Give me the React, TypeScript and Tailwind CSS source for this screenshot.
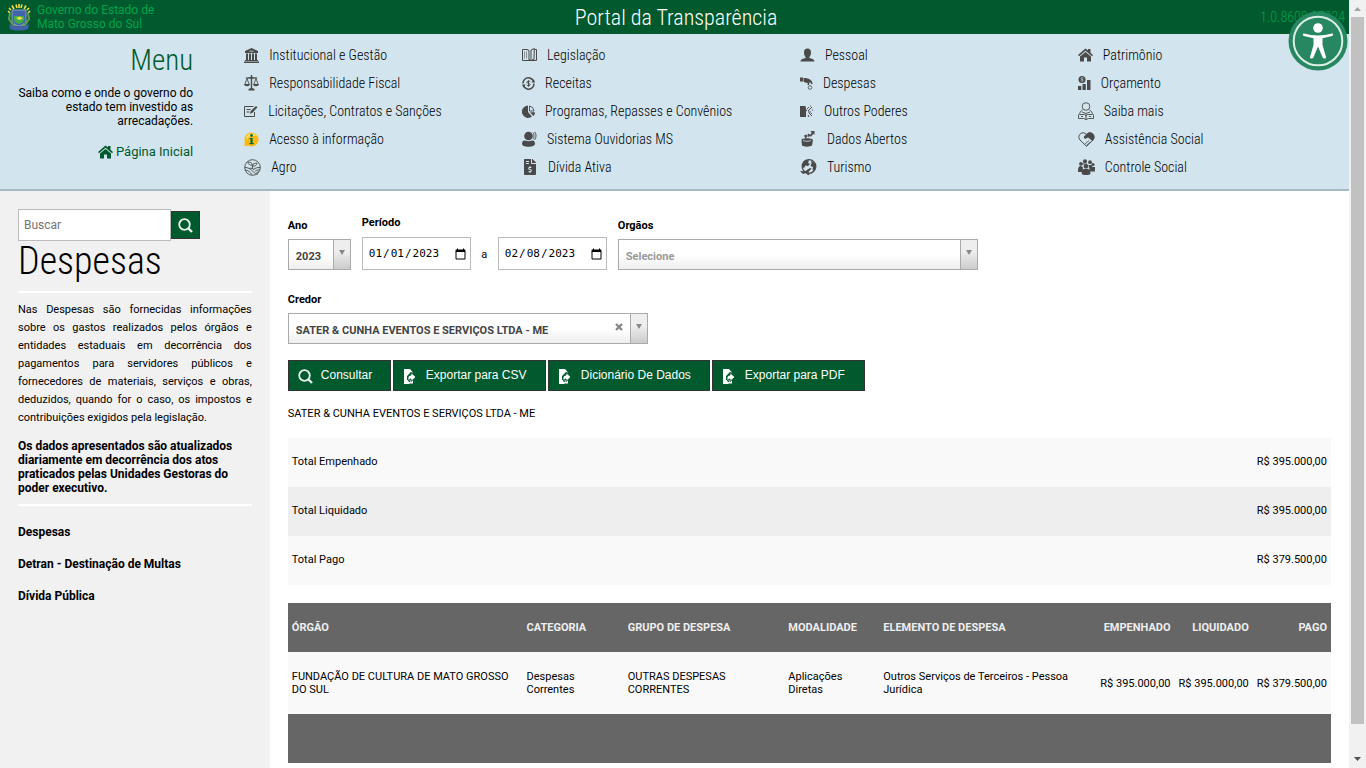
import React, { FC, ReactNode, useState } from 'react'
import { FaFileInvoiceDollar } from 'react-icons/fa'

type MenuItem = {
  name: string
  icon: ReactNode
}

const fill = 'fill-[#4a4a4a]'
const line = 'fill-none stroke-[#4a4a4a]'

const IconBank = () => (
  <svg viewBox="0 0 15 15" className={`w-[15px] h-[15px] ${fill}`}>
    <path d="M7.500 0L14 3v2H1V3zM2 5.500h2V12H2zM5 5.500h2V12H5zM8 5.500h2V12H8zM11 5.500h2V12h-2zM1 12h13v1H1zM0 13.500h15V15H0z" />
    <path d="M5.500 3.200h4" className="stroke-[#d2e4ee]" strokeWidth=".8" />
  </svg>
)

const IconScale = () => (
  <svg viewBox="0 0 15 16" className={`w-[15px] h-[16px] ${fill}`}>
    <path d="M6.800 0h1.400v2l5 .5v1l-5 .3V13l2.300 1v1.500h-6V14l2.300-1V3.800l-5-.3v-1l5-.5z" />
    <path d="M3 3.500L1 9M3 3.500L5 9M12 3.500L10 9M12 3.500l2 5.500" className={line} strokeWidth=".9" />
    <path d="M0 9h6c-.3 3-5.700 3-6 0zM9 9h6c-.3 3-5.700 3-6 0z" />
  </svg>
)

const IconEdit = () => (
  <svg viewBox="0 0 14 14" className={`w-[14px] h-[14px] ${line}`}>
    <path d="M10.500 8v4.500h-10v-10h9M2.500 5.500h4M2.500 8h3" />
    <path d="M6 10l.7-3L12 2l1.500 1.200-5 5.500z" className="fill-[#4a4a4a] stroke-none" />
  </svg>
)

const IconInfo = () => (
  <svg viewBox="0 0 15 15" className="w-[15px] h-[15px]">
    <path d="M7.500.5a7 7 0 1 1-3 13.300L.5 14.300v-7a7 7 0 0 1 7-6.800z" fill="#fdb913" />
    <path d="M2 7a6 5.500 0 0 1 11-3C9 3 5 4 2 7z" fill="#ffe26b" />
    <circle cx="7.500" cy="3.500" r="1.400" fill="#0a6b35" />
    <path d="M5.700 6h3v5h1v1.300H5.500V11h1V7.300h-.8z" fill="#0a6b35" />
  </svg>
)

const IconAgro = () => (
  <svg viewBox="0 0 17 17" className={`w-[17px] h-[17px] ${line}`} strokeWidth=".9">
    <circle cx="8.500" cy="8.500" r="7.800" />
    <path d="M8.500 9.500V6M8.500 6C8 3.500 6 3 4 3.200 4.200 5.500 6 6.500 8.500 6zM8.500 7c.3-2 2-3 4.500-2.800C12.500 6.500 11 7.500 8.500 7z" />
    <path d="M1 8.500c3 0 5 1 8 4s4 3 5 2.200M1 11c3 .2 5 1.500 7 4.800M16 8.500c-3 0-4.500.5-6.500 2M16 11c-2-.2-3.500.2-5 1.200M15 13c-1 0-2 .2-2.500.6M5 9.500c2-.5 4-.2 5 1" />
  </svg>
)

const IconBook = () => (
  <svg viewBox="0 0 15 14" className={`w-[15px] h-[14px] ${line}`}>
    <path d="M7 2.500L5 1.500H.5v11H7zM7 12.500l5-1 .3-11L9 2v8.500L7 12.500M12.500 1.500h2v11H7" />
    <path d="M2.500 3.500v7M4.500 3.500v7" strokeWidth=".9" className="stroke-[#808a90]" />
  </svg>
)

const IconMoney = () => (
  <svg viewBox="0 0 13 13" className={`w-[13px] h-[13px] ${line}`}>
    <path d="M1.300 8a5.500 5.500 0 0 0 9.200 2.500M11.700 5a5.500 5.500 0 0 0-9.200-2.500M1 6.500c0-2 .6-3.100 1.500-4M12 6.500c0 2-.6 3.100-1.500 4" strokeWidth="1.500" />
    <path d="M0 7.500h3.500l-2 3zM9.500 5.500H13l-1-3z" className="fill-[#4a4a4a] stroke-none" />
    <path d="M8.300 4.700C7.500 4 4.900 3.900 4.900 5.400c0 1.300 3.300.8 3.300 2.200 0 1.500-2.700 1.300-3.500.5M6.500 3.300v6.400" />
  </svg>
)

const IconPie = () => (
  <svg viewBox="0 0 13 13" className={`w-[13px] h-[13px] ${fill}`}>
    <path d="M6 .5V7l4 4.500A6.200 6.200 0 1 1 6 .5z" />
    <path d="M7.500 1a5.500 5.500 0 0 1 4.500 5H7.500z" className={line} strokeWidth=".9" />
    <path d="M8 7.300h5c0 1.500-.7 3-1.700 3.800z" />
  </svg>
)

const IconSpeaker = () => (
  <svg viewBox="0 0 15 16" className={`w-[15px] h-[16px] ${fill}`}>
    <circle cx="6.500" cy="5" r="4.300" />
    <path d="M0 12.500C0 10 2 9.500 3 9.500c2 1 5 1 7 0 1 0 3 .5 3 3s-2.500 3.200-6.500 3.200S0 15 0 12.500z" />
    <path d="M11 1.500c1.300 1.500 1.300 5 0 6.500M12.800.8c1.800 2.700 1.600 5.700-.3 8.200" className={line} strokeWidth=".9" />
  </svg>
)

const IconPerson = () => (
  <svg viewBox="0 0 15 14" className={`w-[15px] h-[14px] ${fill}`}>
    <path d="M7.500.5C9.800.5 11 2 11 4.500S9.800 9 9 9.500c.8 1 5.500 1 5.500 4H.5c0-3 4.700-3 5.500-4C5 9 4 7 4 4.500S5.200.5 7.500.5z" />
  </svg>
)

const IconHand = () => (
  <svg viewBox="0 0 13 13" className={`w-[13px] h-[13px] ${fill}`}>
    <path d="M0 .5h3v4H0zM3.500 1c3 0 5.500.5 7 2 1.500 1 2 2.500 2 4l-1.200.2-1-2-.8.3-.5 2.500L7.500 8l.2-2C6 6 4 5 3.500 4.500z" />
    <circle cx="10" cy="10.500" r="1.800" className={line} strokeWidth=".8" />
  </svg>
)

const IconPowers = () => (
  <svg viewBox="0 0 14 13" className={`w-[14px] h-[13px] ${fill}`}>
    <path d="M0 1h5.500l.5 3 1 1.500-1 1V12H0z" />
    <path d="M7 4l2-2M8 6l4-4M8 7h3M9 8l3 3M8 10l1 2M12 5h1M11 8l1 1M10 1h1" className={line} />
  </svg>
)

const IconOpenData = () => (
  <svg viewBox="0 0 17 16" className={`w-[17px] h-[16px] ${fill}`}>
    <path d="M2 8c2-1 8-1 10 0l1 1-1 5.500c-2 1.500-8 1.500-10 0L1.500 9zM4 4.500l2.500-1 1 2-2 2zM8 2.500l2 1-1 3-1.500-2zM10.500 0h4v4l-1.200-1.200-2.300 3-1.500-1 2.200-3z" />
    <path d="M3 9.500c2 1 6 1 8 0" className="fill-none stroke-[#d2e4ee]" strokeWidth=".8" />
  </svg>
)

const IconGlobe = () => (
  <svg viewBox="0 0 17 17" className={`w-[17px] h-[17px] ${fill}`}>
    <circle cx="9" cy="7.500" r="6.800" className={line} strokeWidth="1.300" />
    <path d="M3 3c2-2.500 5-2 6-1.500L8 4l2 1-2 2-2.500-.5L4 9 2 8zM11 2c3 1 5 3 4.500 7l-1.500 3-1.500-1 .5-3-2.500-1 1-2.500z" />
    <path d="M0 12l5 .3L10 9l1.500.5-3 3.500 1 2.500-1.500.8-2-2.300-3 1z" />
  </svg>
)

const IconHouse: FC<{ className: string }> = ({ className }) => (
  <svg viewBox="0 0 15 14" className={`w-[15px] h-[14px] ${className}`}>
    <path d="M7.500.5L10 2.600V1h2.500v3.800L15 7l-1 1.200-6.500-5.500L1 8.200 0 7z" />
    <path d="M7.500 4L13 8.500v5H9V9.500H6v4H2v-5z" />
  </svg>
)

const IconBudget = () => (
  <svg viewBox="0 0 13 14" className={`w-[13px] h-[14px] ${fill}`}>
    <path d="M0 10h3.300v4H0zM4.500 8h3.300v6H4.500zM9 4h3.500v10H9z" />
    <circle cx="4" cy="3.500" r="3.500" />
    <path d="M5.300 2.200c-1-.7-2.500-.3-2.300.6s2.100.4 2.100 1.400-1.600 1-2.300.5" className="fill-none stroke-[#d2e4ee]" strokeWidth=".8" />
  </svg>
)

const IconReader = () => (
  <svg viewBox="0 0 16 18" className={`w-[16px] h-[18px] ${line}`} strokeWidth=".9">
    <circle cx="8" cy="4.500" r="3.800" />
    <path d="M4.500 8C2.500 9 1.500 11 1.500 12.500h5L8 14l1.500-1.500h5C14.500 11 13.500 9 11.500 8M4 10l4 1.500 4-1.500M.5 12.500v4h5L8 17.500l2.500-1h5v-4M3 14.500h2M11 14.500h2M8 12v5.500" />
  </svg>
)

const IconHeart = () => (
  <svg viewBox="0 0 17 15" className={`w-[17px] h-[15px] ${fill}`}>
    <path d="M8.500 14.300L2 8C-.5 5 1.500.8 5 .8c1.500 0 2.700.7 3.500 2 .8-1.300 2-2 3.500-2 3.500 0 5.500 4.200 3 7.200z" className={line} />
    <path d="M5.500 5l3-3C10-.2 14 0 15.500 2.500S16 8 14.500 9L10 5.500 7 7z" />
    <path d="M7 12l4-3.500M8.500 13.500l4-3.500" className={line} strokeWidth=".8" />
  </svg>
)

const IconPeople = () => (
  <svg viewBox="0 0 17 16" className={`w-[17px] h-[16px] ${fill}`}>
    <circle cx="7" cy="2.200" r="2" />
    <circle cx="3" cy="4.800" r="1.900" />
    <circle cx="12" cy="3.200" r="1.900" />
    <circle cx="15" cy="5.500" r="1.600" />
    <circle cx="8" cy="7.200" r="2.300" />
    <path d="M0 12c0-4 1-5 3-5l2 1.500L4.500 13H0zM5 4.500h4v1H5zM10.500 6h3l1 2H17v4.500h-5L11 8zM3.800 15c0-4 1.200-5.200 4.200-5.200s4.500 1.200 4.500 5.200c-2 1.300-7 1.300-8.700 0z" />
  </svg>
)

const menuColumns: MenuItem[][] = [
  [
    { name: 'Institucional e Gestão', icon: <IconBank /> },
    { name: 'Responsabilidade Fiscal', icon: <IconScale /> },
    { name: 'Licitações, Contratos e Sanções', icon: <IconEdit /> },
    { name: 'Acesso à informação', icon: <IconInfo /> },
    { name: 'Agro', icon: <IconAgro /> }
  ],
  [
    { name: 'Legislação', icon: <IconBook /> },
    { name: 'Receitas', icon: <IconMoney /> },
    { name: 'Programas, Repasses e Convênios', icon: <IconPie /> },
    { name: 'Sistema Ouvidorias MS', icon: <IconSpeaker /> },
    { name: 'Dívida Ativa', icon: <FaFileInvoiceDollar size={16} className={fill} /> }
  ],
  [
    { name: 'Pessoal', icon: <IconPerson /> },
    { name: 'Despesas', icon: <IconHand /> },
    { name: 'Outros Poderes', icon: <IconPowers /> },
    { name: 'Dados Abertos', icon: <IconOpenData /> },
    { name: 'Turismo', icon: <IconGlobe /> }
  ],
  [
    { name: 'Patrimônio', icon: <IconHouse className={fill} /> },
    { name: 'Orçamento', icon: <IconBudget /> },
    { name: 'Saiba mais', icon: <IconReader /> },
    { name: 'Assistência Social', icon: <IconHeart /> },
    { name: 'Controle Social', icon: <IconPeople /> }
  ]
]

const totals = [
  { name: 'Total Empenhado', value: 'R$ 395.000,00' },
  { name: 'Total Liquidado', value: 'R$ 395.000,00' },
  { name: 'Total Pago', value: 'R$ 379.500,00' }
]

const sideLinks = ['Despesas', 'Detran - Destinação de Multas', 'Dívida Pública']

const condensed = "font-['Roboto_Condensed','Roboto',sans-serif] font-light"

const IconSearch = () => (
  <svg viewBox="0 0 15 15" className="w-[15px] h-[15px] fill-none stroke-[#e8f1ec]">
    <circle cx="6.500" cy="6.500" r="5.300" strokeWidth="1.800" />
    <path d="M10.500 10.500l3.500 3.500" strokeWidth="2.400" />
  </svg>
)

const IconExport = () => (
  <svg viewBox="0 0 14 15" className="w-[14px] h-[15px]">
    <path d="M1 0h6v4l-3 3v5l3 3H1z" fill="#fff" />
    <path d="M7 0l3 3.500H7zM4 11h6v3.500H4z" fill="#fff" />
    <path d="M8 3.500L13 8l-5 4.500V10C6.500 10 6 11 6.500 13 4 10 4.500 6.500 8 6z" fill="#fff" stroke="#005a2d" />
  </svg>
)

const Crest = () => (
  <svg viewBox="0 0 24 27" className="w-[24px] h-[27px]" aria-hidden="true">
    <path d="M3 9l-2-2M4 6L2 4M7 5L5 1.500M10 4L9 .5M12 4V0M14 4l1-3.500M17 5l2-3.500M20 6l2-2M21 9l2-2" stroke="#f6e04b" strokeWidth="1.600" />
    <path d="M3 9l-1 6 4 6h12l4-6-1-6" fill="none" stroke="#5c9e54" strokeWidth="2" />
    <path d="M5 6h14v9c0 4-3 6-7 7-4-1-7-3-7-7z" fill="#3f66ad" stroke="#8f9ec0" />
    <path d="M7 12h10v3c0 3-2 4-5 5-3-1-5-2-5-5z" fill="#41ad49" />
    <path d="M9 14l4-1.500 3 2-4 1.500z" fill="#f3df3c" />
    <path d="M2 20c4 3 16 3 20 0l-1 5c-5 2-13 2-18 0z" fill="#4462a8" />
  </svg>
)

const Accessibility = () => (
  <button aria-label="Acessibilidade" className="absolute right-px top-[11px]">
    <svg viewBox="0 0 60 60" className="w-[60px] h-[60px]">
      <circle cx="30" cy="30" r="29.500" fill="#268760" />
      <circle cx="30" cy="30" r="24.300" fill="none" stroke="#dcefe6" strokeWidth="2" />
      <circle cx="30" cy="17" r="4.800" fill="#fff" />
      <path d="M16 22.500c9 2.500 19 2.500 28 0 1.500-.2 1.500 2 0 2.500l-9.500 2.200V34l3.500 12c.3 2-2.700 2.200-3.500.3L30 35.500l-4.500 10.800c-.8 1.900-3.800 1.700-3.500-.3L25.500 34v-6.800L16 25c-1.500-.5-1.500-2.700 0-2.500z" fill="#fff" />
    </svg>
  </button>
)

const SelectField: FC<{
  id: string
  title: string
  option: string
  clsRoot: string
  clsText?: string
  clear?: boolean
}> = ({ id, title, option, clsRoot, clsText = 'text-[#444]', clear }) => (
  <div className={clsRoot}>
    <label htmlFor={id} className="block mb-[7px] font-bold leading-3">
      {title}
    </label>
    <div className="relative">
      <select
        id={id}
        className={`block w-full h-[31px] appearance-none border border-[#aaa] bg-linear-to-t from-[#eee] to-white to-50% pl-[7px] pt-[5px] font-bold ${clsText}`}
      >
        <option>{option}</option>
      </select>
      {clear && (
        <button aria-label="Limpar" className="absolute right-[25px] top-[10px]">
          <svg viewBox="0 0 8 8" className="w-[8px] h-[8px] stroke-[#888]" strokeWidth="2.400">
            <path d="M1 1l6 6M7 1L1 7" />
          </svg>
        </button>
      )}
      <span className="pointer-events-none absolute right-0 top-0 h-[31px] w-[18px] border border-[#aaa] bg-linear-to-t from-[#ccc] to-[#eee] to-60% flex justify-center pt-[10px]">
        <svg viewBox="0 0 6 5" className="w-[6px] h-[5px] fill-[#888]">
          <path d="M0 0h6L3 5z" />
        </svg>
      </span>
    </div>
  </div>
)

const DateField: FC<{ id: string; label: string; start: string }> = ({ id, label, start }) => {
  const [value, setValue] = useState<string>(start)
  return (
    <input
      id={id}
      aria-label={label}
      type="date"
      value={value}
      onChange={(e) => setValue(e.target.value)}
      className="block w-[109px] h-[33px] border border-[#bbb] bg-white pl-[5px] pr-px pt-[2px] font-['DejaVu_Sans_Mono',monospace] text-[11px] [&::-webkit-calendar-picker-indicator]:h-[13px] [&::-webkit-calendar-picker-indicator]:w-[13px]"
    />
  )
}

const ActionButton: FC<{ icon: ReactNode; cls: string; children: ReactNode }> = ({ icon, cls, children }) => (
  <button
    className={`flex h-[31px] items-center border border-[#333] bg-[#005a2d] pb-[2px] pl-[9px] text-[12px] text-white font-['Liberation_Sans',sans-serif] ${cls}`}
  >
    <span className="mt-1 w-[23px]">{icon}</span>
    <span>{children}</span>
  </button>
)

const Header = () => (
  <header>
    <div className="relative flex h-[34px] items-center bg-[#005a2d]">
      <div className="flex flex-1 items-center gap-[6px] pl-[7px] text-[12px] leading-[14px] text-[#00a44a]">
        <Crest />
        <span>
          Governo do Estado de
          <br />
          Mato Grosso do Sul
        </span>
      </div>
      <h1 className={`pt-[2px] text-[22px] leading-8 text-white ${condensed}`}>Portal da Transparência</h1>
      <div className={`flex-1 pr-1 text-right text-[14px] text-[#00a44a] ${condensed}`}>1.0.8608.27224</div>
      <Accessibility />
    </div>
    <div className="grid h-[157px] grid-cols-[18.1%_20.6%_20.6%_20.6%_1fr] border-b-2 border-[#a4bbc6] bg-[#d2e4ee]">
      <div className="pr-[51px] pt-[10px] text-right">
        <h2 className={`text-[29px] leading-8 text-[#005a2d] ${condensed}`}>Menu</h2>
        <p className="mt-[10px] pl-3 text-[12px] leading-[14px]">
          Saiba como e onde o governo do estado tem investido as arrecadações.
        </p>
        <a href="#" className="mt-4 flex items-center justify-end gap-[3px] text-[13px] leading-4 text-[#005a2d]">
          <IconHouse className="fill-[#005a2d]" />
          Página Inicial
        </a>
      </div>
      {menuColumns.map((column, i) => (
        <ul key={i} className="pt-[7px]">
          {column.map((m) => (
            <li key={m.name}>
              <a href="#" className={`flex h-7 items-center gap-[10px] text-[14px] text-black ${condensed}`}>
                {m.icon}
                {m.name}
              </a>
            </li>
          ))}
        </ul>
      ))}
    </div>
  </header>
)

const Sidebar = () => (
  <aside className="w-1/5 bg-[#f1f1f1] px-[18px] pt-[18px]">
    <form className="flex items-center">
      <input
        type="text"
        aria-label="Buscar"
        placeholder="Buscar"
        className="h-[32px] w-[153px] border border-[#bbb] bg-white px-[5px] text-[12px] placeholder:text-[#757575] font-['Roboto',sans-serif]"
      />
      <button aria-label="Pesquisar" className="flex h-[28px] w-[29px] items-center justify-center border border-[#333] bg-[#005a2d]">
        <IconSearch />
      </button>
    </form>
    <h2 className={`border-b-2 border-white pb-[10px] text-[38px] leading-[40px] ${condensed}`}>Despesas</h2>
    <p className="mt-2 text-justify text-[11px] leading-[18px]">
      Nas Despesas são fornecidas informações sobre os gastos realizados pelos órgãos e entidades estaduais em
      decorrência dos pagamentos para servidores públicos e fornecedores de materiais, serviços e obras, deduzidos,
      quando for o caso, os impostos e contribuições exigidos pela legislação.
    </p>
    <p className="mt-3 border-b-2 border-white pb-[9px] text-[12px] font-bold leading-[14px]">
      Os dados apresentados são atualizados diariamente em decorrência dos atos praticados pelas Unidades Gestoras do
      poder executivo.
    </p>
    <nav className="mt-[18px] flex flex-col gap-4 text-[12px] font-bold leading-4">
      {sideLinks.map((l) => (
        <a key={l} href="#">
          {l}
        </a>
      ))}
    </nav>
  </aside>
)

const Results = () => (
  <>
    <table className="mt-[17px] w-full">
      <tbody>
        {totals.map((r) => (
          <tr key={r.name} className="h-[49px] odd:bg-[#f9f9f9] even:bg-[#eee]">
            <td className="px-1">{r.name}</td>
            <td className="px-1 text-right">{r.value}</td>
          </tr>
        ))}
      </tbody>
    </table>
    <table className="mt-[18px] w-full table-fixed text-left leading-[13px]">
      <thead>
        <tr className="h-[49px] bg-[#666] text-[#eee]">
          <th className="w-[22.5%] px-1">ÓRGÃO</th>
          <th className="w-[9.7%] px-1">CATEGORIA</th>
          <th className="w-[15.4%] px-1">GRUPO DE DESPESA</th>
          <th className="w-[9.1%] px-1">MODALIDADE</th>
          <th className="px-1">ELEMENTO DE DESPESA</th>
          <th className="w-[7.5%] px-1 text-right">EMPENHADO</th>
          <th className="w-[7.5%] px-1 text-right">LIQUIDADO</th>
          <th className="w-[7.5%] px-1 text-right">PAGO</th>
        </tr>
      </thead>
      <tbody>
        <tr className="h-[62px] bg-[#f9f9f9]">
          <td className="px-1">FUNDAÇÃO DE CULTURA DE MATO GROSSO DO SUL</td>
          <td className="px-1">Despesas Correntes</td>
          <td className="pl-1 pr-12">OUTRAS DESPESAS CORRENTES</td>
          <td className="px-1">Aplicações Diretas</td>
          <td className="px-1">Outros Serviços de Terceiros - Pessoa Jurídica</td>
          <td className="whitespace-nowrap px-1 text-right">R$ 395.000,00</td>
          <td className="whitespace-nowrap px-1 text-right">R$ 395.000,00</td>
          <td className="whitespace-nowrap px-1 text-right">R$ 379.500,00</td>
        </tr>
      </tbody>
      <tfoot>
        <tr className="h-[49px] bg-[#666]">
          <td colSpan={8} />
        </tr>
      </tfoot>
    </table>
  </>
)

const Scrollbar = () => (
  <div className="flex w-[17px] flex-col items-center bg-[#f1f1f1]">
    <svg viewBox="0 0 17 17" className="w-[17px] h-[17px] fill-[#a3a3a3]">
      <path d="M5 11h7L8.500 7z" />
    </svg>
    <div className="h-[92%] w-[13px] bg-[#c1c1c1]" />
    <svg viewBox="0 0 17 17" className="mt-auto w-[17px] h-[17px] fill-[#505050]">
      <path d="M5 6h7l-3.500 4z" />
    </svg>
  </div>
)

const App = () => {
  return (
    <div className="flex h-screen overflow-hidden bg-white text-[11px] text-black font-['Roboto',sans-serif]">
      <div className="flex min-w-0 flex-1 flex-col">
        <Header />
        <div className="flex flex-1">
          <Sidebar />
          <main className="w-4/5 px-[18px] pt-[25px]">
            <div className="flex items-end">
              <SelectField id="ano" title="Ano" option="2023" clsRoot="w-[63px]" />
              <div className="ml-[11px]">
                <label htmlFor="inicio" className="mb-[7px] block font-bold leading-[14px]">
                  Período
                </label>
                <div className="flex items-center">
                  <DateField id="inicio" label="Período inicial" start="2023-01-01" />
                  <span className="w-[27px] pt-1 text-center">a</span>
                  <DateField id="fim" label="Período final" start="2023-02-08" />
                </div>
              </div>
              <SelectField id="orgaos" title="Orgãos" option="Selecione" clsRoot="ml-[11px] w-[360px]" clsText="text-[#999]" />
            </div>
            <div className="mt-6">
              <SelectField
                id="credor"
                title="Credor"
                option="SATER & CUNHA EVENTOS E SERVIÇOS LTDA - ME"
                clsRoot="w-[360px]"
                clear
              />
            </div>
            <div className="mt-4 flex gap-[2px]">
              <ActionButton icon={<IconSearch />} cls="w-[103px]">
                Consultar
              </ActionButton>
              <ActionButton icon={<IconExport />} cls="w-[153px]">
                Exportar para CSV
              </ActionButton>
              <ActionButton icon={<IconExport />} cls="w-[162px]">
                Dicionário De Dados
              </ActionButton>
              <ActionButton icon={<IconExport />} cls="w-[153px]">
                Exportar para PDF
              </ActionButton>
            </div>
            <p className="mt-[15px] leading-[15px]">SATER &amp; CUNHA EVENTOS E SERVIÇOS LTDA - ME</p>
            <Results />
          </main>
        </div>
      </div>
      <Scrollbar />
    </div>
  )
}

export default App
